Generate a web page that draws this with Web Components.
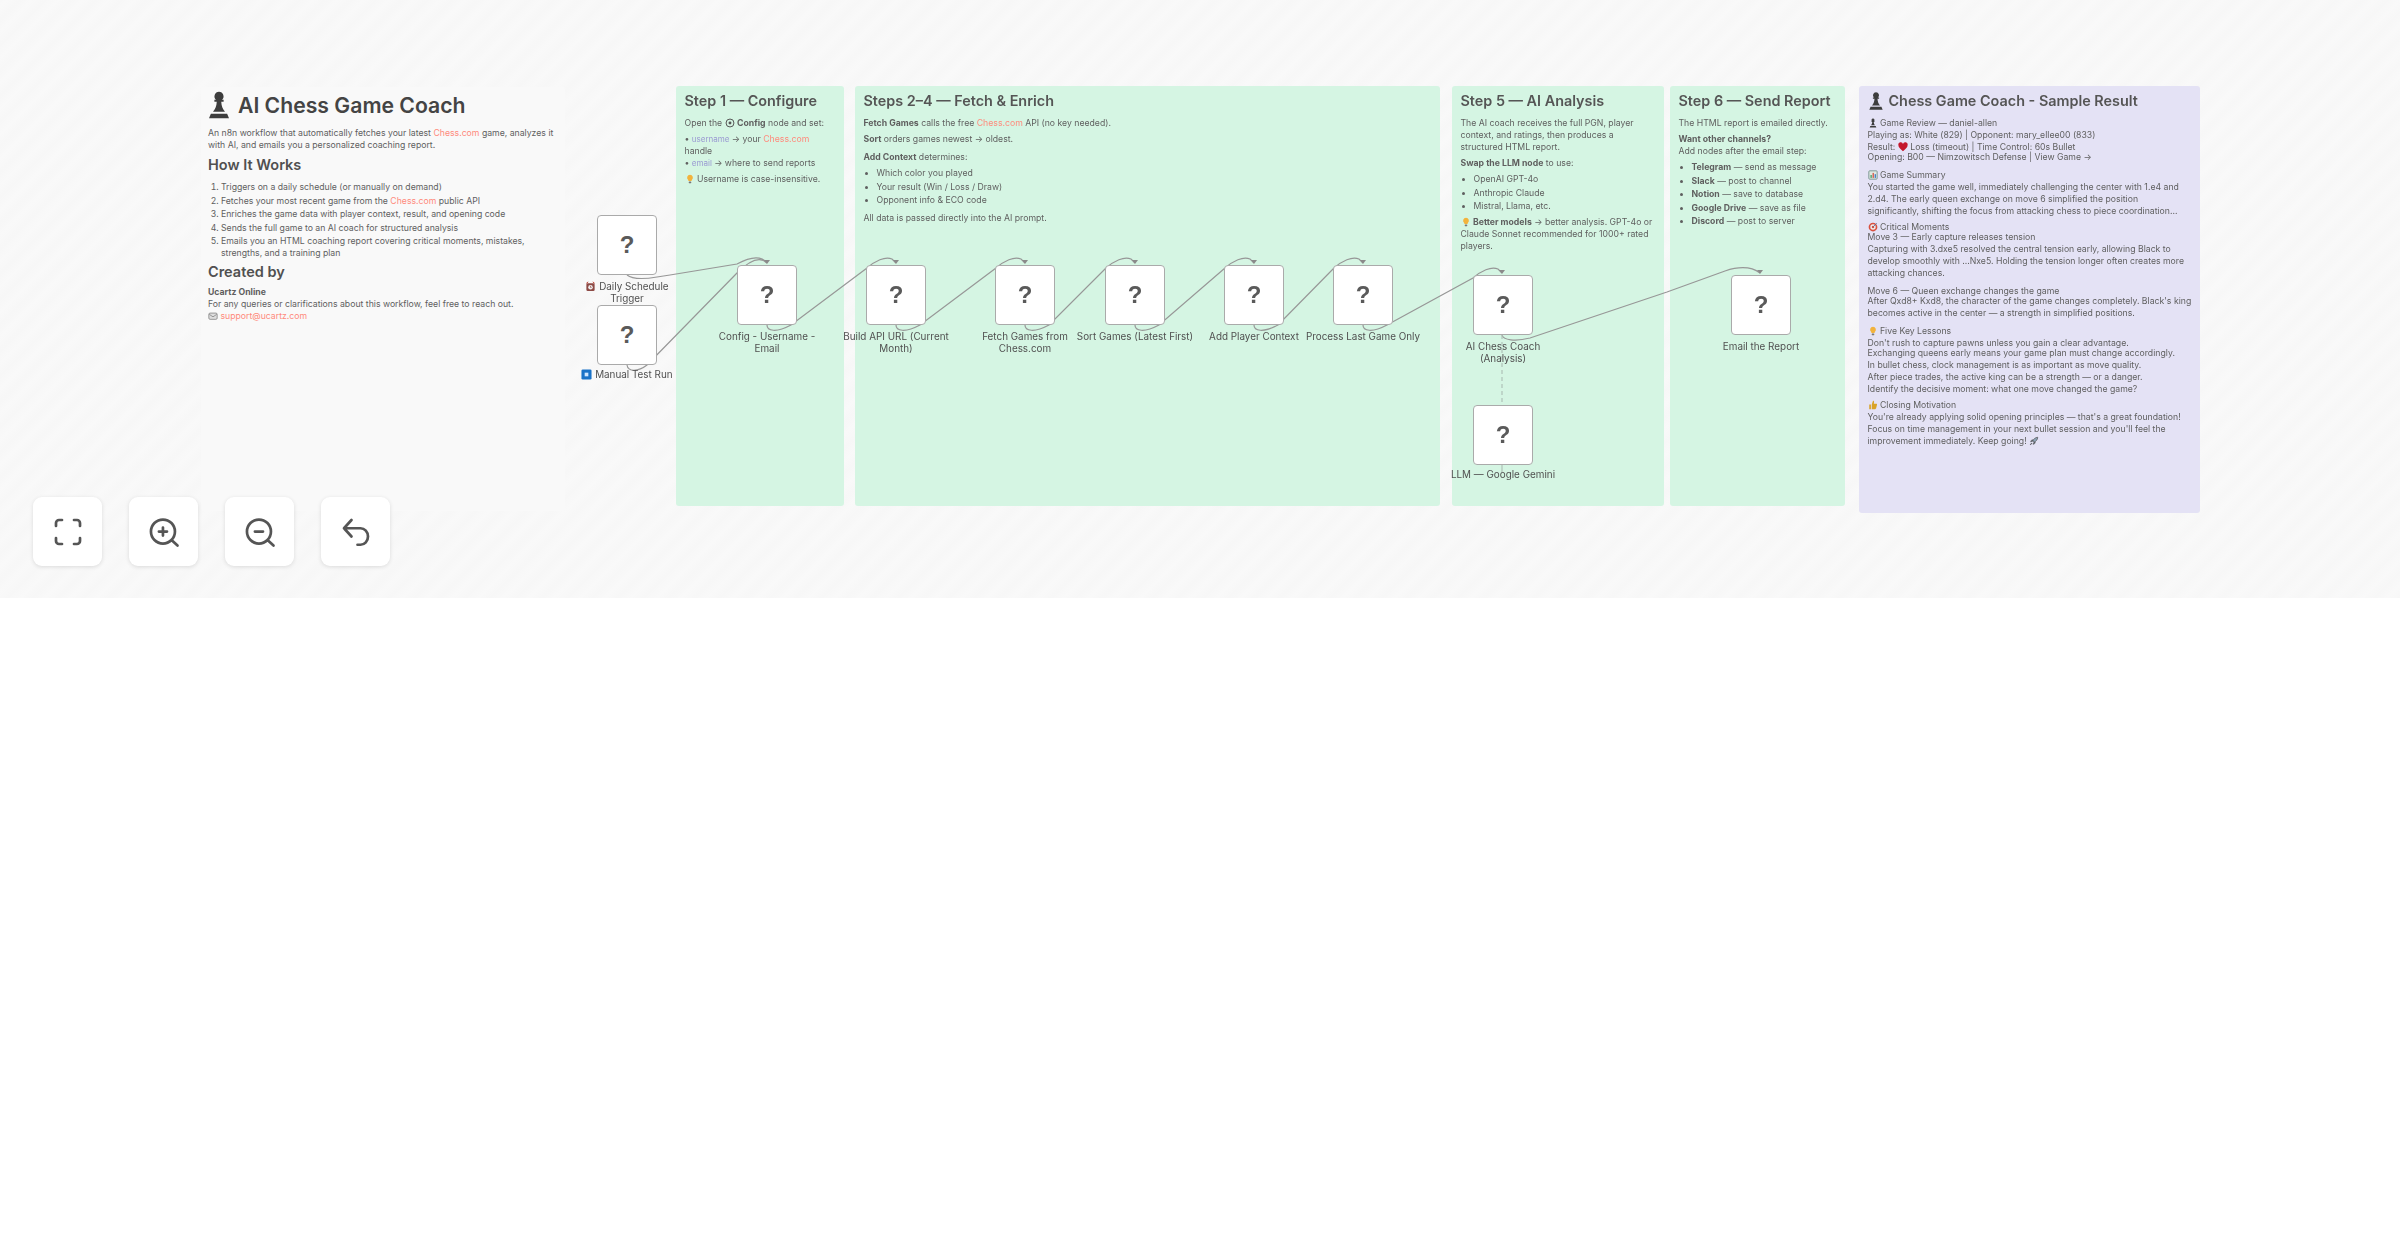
<!DOCTYPE html>
<html>
<head>
<meta charset="utf-8">
<style>
    html, body { margin: 0; background: #fff; }
</style>
</head>
<body>
<wf-canvas>
    <wf-note x="201" y="87" w="364" h="424" tone="plain">
        <h1><wf-icon name="pawn" size="30" style="margin-left:-4px"></wf-icon>AI Chess Game Coach</h1>
        <p style="margin-top:7px">An n8n workflow that automatically fetches your latest <wf-link>Chess.com</wf-link> game, analyzes it with AI, and emails you a personalized coaching report.</p>
        <h2 style="margin-top:5px">How It Works</h2>
        <ol style="margin-top:7px">
            <li>Triggers on a daily schedule (or manually on demand)</li>
            <li>Fetches your most recent game from the <wf-link>Chess.com</wf-link> public API</li>
            <li>Enriches the game data with player context, result, and opening code</li>
            <li>Sends the full game to an AI coach for structured analysis</li>
            <li>Emails you an HTML coaching report covering critical moments, mistakes, strengths, and a training plan</li>
        </ol>
        <h2 style="margin-top:4px">Created by</h2>
        <p style="margin-top:5px"><b>Ucartz Online</b><br>For any queries or clarifications about this workflow, feel free to reach out.<br><wf-icon name="mail"></wf-icon> <wf-link>support@ucartz.com</wf-link></p>
    </wf-note>

    <wf-note x="676" y="86" w="168" h="420">
        <h3>Step 1 — Configure</h3>
        <p>Open the <wf-icon name="gear"></wf-icon> <b>Config</b> node and set:</p>
        <p>• <wf-code>username</wf-code> → your <wf-link>Chess.com</wf-link> handle<br>• <wf-code>email</wf-code> → where to send reports</p>
        <p><wf-icon name="bulb"></wf-icon> Username is case-insensitive.</p>
    </wf-note>

    <wf-note x="855" y="86" w="585" h="420">
        <h3>Steps 2–4 — Fetch &amp; Enrich</h3>
        <p><b>Fetch Games</b> calls the free <wf-link>Chess.com</wf-link> API (no key needed).</p>
        <p><b>Sort</b> orders games newest → oldest.</p>
        <p style="margin-top:6px"><b>Add Context</b> determines:</p>
        <ul>
            <li>Which color you played</li>
            <li>Your result (Win / Loss / Draw)</li>
            <li>Opponent info &amp; ECO code</li>
        </ul>
        <p style="margin-top:6px">All data is passed directly into the AI prompt.</p>
    </wf-note>

    <wf-note x="1452" y="86" w="212" h="420">
        <h3>Step 5 — AI Analysis</h3>
        <p>The AI coach receives the full PGN, player context, and ratings, then produces a structured HTML report.</p>
        <p><b>Swap the LLM node</b> to use:</p>
        <ul>
            <li>OpenAI GPT-4o</li>
            <li>Anthropic Claude</li>
            <li>Mistral, Llama, etc.</li>
        </ul>
        <p><wf-icon name="bulb"></wf-icon> <b>Better models</b> → better analysis. GPT-4o or Claude Sonnet recommended for 1000+ rated players.</p>
    </wf-note>

    <wf-note x="1670" y="86" w="175" h="420">
        <h3>Step 6 — Send Report</h3>
        <p>The HTML report is emailed directly.</p>
        <p><b>Want other channels?</b><br>Add nodes after the email step:</p>
        <ul>
            <li><b>Telegram</b> — send as message</li>
            <li><b>Slack</b> — post to channel</li>
            <li><b>Notion</b> — save to database</li>
            <li><b>Google Drive</b> — save as file</li>
            <li><b>Discord</b> — post to server</li>
        </ul>
    </wf-note>

    <wf-note x="1859" y="86" w="341" h="427" tone="purple">
        <h3><wf-icon name="pawn" size="20" style="margin:-2px 1px -2px -2px"></wf-icon>Chess Game Coach - Sample Result</h3>
        <p>
            <wf-line><wf-icon name="pawn"></wf-icon> Game Review — daniel-allen</wf-line>
            <wf-line>Playing as: White (829) | Opponent: mary_ellee00 (833)</wf-line>
            <wf-line>Result: <wf-icon name="heart"></wf-icon> Loss (timeout) | Time Control: 60s Bullet</wf-line>
            <wf-line tight>Opening: B00 — Nimzowitsch Defense | View Game →</wf-line>
        </p>
        <p style="margin-top:6px">
            <wf-line><wf-icon name="chart"></wf-icon> Game Summary</wf-line>
            <wf-line>You started the game well, immediately challenging the center with 1.e4 and</wf-line>
            <wf-line>2.d4. The early queen exchange on move 6 simplified the position</wf-line>
            <wf-line>significantly, shifting the focus from attacking chess to piece coordination...</wf-line>
        </p>
        <p>
            <wf-line><wf-icon name="target"></wf-icon> Critical Moments</wf-line>
            <wf-line tight>Move 3 — Early capture releases tension</wf-line>
            <wf-line>Capturing with 3.dxe5 resolved the central tension early, allowing Black to</wf-line>
            <wf-line>develop smoothly with ...Nxe5. Holding the tension longer often creates more</wf-line>
            <wf-line>attacking chances.</wf-line>
        </p>
        <p style="margin-top:6px">
            <wf-line>Move 6 — Queen exchange changes the game</wf-line>
            <wf-line tight>After Qxd8+ Kxd8, the character of the game changes completely. Black's king</wf-line>
            <wf-line>becomes active in the center — a strength in simplified positions.</wf-line>
        </p>
        <p style="margin-top:6px">
            <wf-line><wf-icon name="bulb"></wf-icon> Five Key Lessons</wf-line>
            <wf-line>Don't rush to capture pawns unless you gain a clear advantage.</wf-line>
            <wf-line tight>Exchanging queens early means your game plan must change accordingly.</wf-line>
            <wf-line>In bullet chess, clock management is as important as move quality.</wf-line>
            <wf-line>After piece trades, the active king can be a strength — or a danger.</wf-line>
            <wf-line>Identify the decisive moment: what one move changed the game?</wf-line>
        </p>
        <p>
            <wf-line><wf-icon name="thumb"></wf-icon> Closing Motivation</wf-line>
            <wf-line>You're already applying solid opening principles — that's a great foundation!</wf-line>
            <wf-line>Focus on time management in your next bullet session and you'll feel the</wf-line>
            <wf-line>improvement immediately. Keep going! <wf-icon name="rocket"></wf-icon></wf-line>
        </p>
    </wf-note>

    <wf-edges></wf-edges>

    <wf-node x="597" y="215"><wf-icon name="alarm" size="11"></wf-icon> Daily Schedule Trigger</wf-node>
    <wf-node x="597" y="305" tight><wf-icon name="play" size="11"></wf-icon> Manual Test Run</wf-node>
    <wf-node x="737" y="265">Config - Username - Email</wf-node>
    <wf-node x="866" y="265">Build API URL (Current Month)</wf-node>
    <wf-node x="995" y="265">Fetch Games from Chess.com</wf-node>
    <wf-node x="1105" y="265">Sort Games (Latest First)</wf-node>
    <wf-node x="1224" y="265">Add Player Context</wf-node>
    <wf-node x="1333" y="265">Process Last Game Only</wf-node>
    <wf-node x="1473" y="275">AI Chess Coach (Analysis)</wf-node>
    <wf-node x="1473" y="405" tight>LLM — Google Gemini</wf-node>
    <wf-node x="1731" y="275">Email the Report</wf-node>

    <wf-toolbar slot="overlay">
        <wf-tool-button icon="fit"></wf-tool-button>
        <wf-tool-button icon="in"></wf-tool-button>
        <wf-tool-button icon="out"></wf-tool-button>
        <wf-tool-button icon="undo"></wf-tool-button>
    </wf-toolbar>
</wf-canvas>

<script>
    const ICONS = {
        pawn: '<path fill="#3d3d3d" d="M12 1.5a3.6 3.6 0 0 1 2.4 6.3h1.3v1.6h-1.9c.2 3.4 1 5.6 3 8h-9.600c2-2.400 2.800-4.600 3-8H8.300V7.800h1.300A3.600 3.600 0 0 1 12 1.500zM5.500 19h13l1.500 3.500H4z"/>',
        alarm: '<rect x="3" y="5" width="18" height="17" rx="3" fill="#8d4a45"/><circle cx="12" cy="13.500" r="5" fill="#eee"/><path d="M12 10.500v3.500h2.500" stroke="#8d4a45" stroke-width="1.500" fill="none"/><path d="M3 5l4-3M21 5l-4-3" stroke="#c0392b" stroke-width="2"/>',
        play: '<rect x="1" y="1" width="22" height="22" rx="3" fill="#1a73c8"/><rect x="8" y="8" width="8" height="8" fill="#cfe6ff"/>',
        bulb: '<path fill="#f2b33d" d="M12 2a7 7 0 0 1 4 12.700V17H8v-2.300A7 7 0 0 1 12 2z"/><rect x="9" y="18" width="6" height="4" rx="1" fill="#777"/>',
        gear: '<circle cx="12" cy="12" r="9.500" fill="none" stroke="#555" stroke-width="2.400"/><circle cx="12" cy="12" r="3.500" fill="#555"/>',
        mail: '<rect x="2" y="5" width="20" height="15" rx="3" fill="#ddd" stroke="#888" stroke-width="2"/><path d="M3 8l9 6 9-6" fill="none" stroke="#888" stroke-width="2"/>',
        heart: '<path fill="#c4172c" d="M12 22C5 16 1 12 1 7.500A5.500 5.500 0 0 1 12 5a5.500 5.500 0 0 1 11 2.500C23 12 19 16 12 22z"/>',
        chart: '<rect x="2" y="2" width="20" height="20" rx="2" fill="#dfe8e2" stroke="#6b8a86" stroke-width="2"/><rect x="6" y="12" width="3" height="7" fill="#3d9a5f"/><rect x="11" y="7" width="3" height="12" fill="#d0503f"/><rect x="16" y="10" width="3" height="9" fill="#3b76c4"/>',
        target: '<circle cx="12" cy="12" r="10.500" fill="#d9503f"/><circle cx="12" cy="12" r="6.500" fill="#eee"/><circle cx="12" cy="12" r="3" fill="#d9503f"/><path d="M12 12L21 3" stroke="#4a6fa5" stroke-width="2"/>',
        thumb: '<path fill="#d9a227" d="M3 11h4v11H3zM9 11l3-9c2 0 3 1.500 2.500 4L14 9h6c1.500 0 2 1.500 1.500 3l-2 8c-.3 1.300-1 2-2.500 2H9z"/>',
        rocket: '<path fill="#8fa6b8" stroke="#444" stroke-width="1.500" d="M21 3c-6 .5-10 4-12 9l3 3c5-2 8.500-6 9-12zM8 13l-4 1 2-4 3-1zM11 16l-1 4 4-2 1-3zM6 17l-3 4 4-3z"/>'
    };

    customElements.define('wf-icon',
        class extends HTMLElement {
            connectedCallback() {
                const size = this.getAttribute('size') || 10;
                this.attachShadow({ mode: 'open' }).innerHTML = `
                    <style>
                        :host { display: inline-block; vertical-align: -1.5px; line-height: 0; flex: none; }
                    </style>
                    <svg width="${size}" height="${size}" viewBox="0 0 24 24">${ICONS[this.getAttribute('name')]}</svg>
                `;
            }
        });

    customElements.define('wf-link',
        class extends HTMLElement {
            constructor() {
                super();
                this.attachShadow({ mode: 'open' }).innerHTML = `
                    <style>:host { color: #ff8a7c; }</style><slot></slot>
                `;
            }
        });

    customElements.define('wf-code',
        class extends HTMLElement {
            constructor() {
                super();
                this.attachShadow({ mode: 'open' }).innerHTML = `
                    <style>:host { color: #9a9ad2; font-size: 8px; }</style><slot></slot>
                `;
            }
        });

    customElements.define('wf-line',
        class extends HTMLElement {
            constructor() {
                super();
                this.attachShadow({ mode: 'open' }).innerHTML = `
                    <style>
                        :host { display: block; white-space: nowrap; }
                        :host([tight]) { margin-top: -2px; }
                    </style>
                    <slot></slot>
                `;
            }
        });

    customElements.define('wf-note',
        class extends HTMLElement {
            constructor() {
                super();
                this.attachShadow({ mode: 'open' }).innerHTML = `
                    <style>
                        :host {
                            position: absolute;
                            box-sizing: border-box;
                            padding: 7px 8.500px;
                            border-radius: 3px;
                            background: #d5f5e3;
                            color: #5f5f5f;
                            font: 8.700px/12px Inter, "Noto Sans", sans-serif;
                            overflow: hidden;
                        }
                        :host([tone="plain"]) { background: #f9f9f9; padding: 3px 7px; }
                        :host([tone="purple"]) { background: #e4e2f5; }
                        ::slotted(h1) {
                            display: flex;
                            align-items: center;
                            gap: 4px;
                            height: 30px;
                            margin: 0;
                            font-size: 21.200px;
                            font-weight: 600;
                            color: #444;
                        }
                        ::slotted(h2) {
                            margin: 0;
                            font-size: 14.500px;
                            line-height: 18px;
                            font-weight: 600;
                            color: #505050;
                        }
                        ::slotted(h3) {
                            display: flex;
                            align-items: center;
                            gap: 2px;
                            height: 16px;
                            margin: 0 0 8px;
                            font-size: 14.400px;
                            font-weight: 600;
                            color: #555;
                        }
                        ::slotted(p) { margin: 0 0 4px; }
                        ::slotted(ul), ::slotted(ol) {
                            display: flex;
                            flex-direction: column;
                            gap: 1.500px;
                            margin: 0 0 4px;
                            padding-left: 13px;
                        }
                    </style>
                    <slot></slot>
                `;
            }

            connectedCallback() {
                this.style.left = this.getAttribute('x') + 'px';
                this.style.top = this.getAttribute('y') + 'px';
                this.style.width = this.getAttribute('w') + 'px';
                this.style.height = this.getAttribute('h') + 'px';
            }
        });

    customElements.define('wf-node',
        class extends HTMLElement {
            constructor() {
                super();
                this.attachShadow({ mode: 'open' }).innerHTML = `
                    <style>
                        :host {
                            position: absolute;
                            width: 60px;
                            color: #505050;
                            font: 9.900px/12px Inter, "Noto Sans", sans-serif;
                        }
                        .box {
                            box-sizing: border-box;
                            display: flex;
                            align-items: center;
                            justify-content: center;
                            height: 60px;
                            background: #fff;
                            border: 1.500px solid #aaa;
                            border-radius: 4px;
                            color: #5a5a5a;
                            font: bold 24px "Liberation Sans", sans-serif;
                        }
                        .label {
                            width: 118px;
                            margin: 5px 0 0 -29px;
                            text-align: center;
                        }
                        :host([tight]) .label { margin-top: 3px; }
                    </style>
                    <div class="box">?</div>
                    <div class="label"><slot></slot></div>
                `;
            }

            connectedCallback() {
                this.style.left = this.getAttribute('x') + 'px';
                this.style.top = this.getAttribute('y') + 'px';
            }
        });

    customElements.define('wf-edges',
        class extends HTMLElement {
            // from a node's bottom centre to the top centre of the next one
            build_edge(x1, y1, x2, y2) {
                return `M${x1} ${y1}C${x1} ${y1 + 6} ${x1 + 9} ${y1 + 8} ${x1 + 24} ${y1}L${x2 - 29} ${y2 + 5}C${x2 - 21} ${y2 - 2} ${x2 - 11} ${y2 - 7} ${x2 - 4} ${y2 - 4}L${x2} ${y2}`;
            }

            constructor() {
                super();
                const row = [[767, 896], [896, 1025], [1025, 1135], [1135, 1254], [1254, 1363]];
                let paths = row.map(([a, b]) => this.build_edge(a, 325, b, 263));
                paths.push(this.build_edge(1363, 325, 1502, 273));
                paths.push('M627 275C632 279 645 279 657 277L670 275L737 264C748 258 760 254 767 263');
                paths.push('M627 365C628 372 638 372 647 365L737 273C745 265 758 254 767 263');
                paths.push('M1502 335C1503 340 1515 342 1530 338L1667 292L1725 271C1740 266 1752 267 1760 273');

                const ends = [[896, 263], [1025, 263], [1135, 263], [1254, 263], [1363, 263], [1502, 273], [767, 263], [1760, 273]];
                const arrows = ends.map(([x, y]) => `<path d="M${x - 3} ${y - 3}h6l-3 4z" fill="#8a8a8a"/>`).join('');

                this.attachShadow({ mode: 'open' }).innerHTML = `
                    <style>
                        :host { position: absolute; left: 0; top: 0; }
                        svg { display: block; }
                    </style>
                    <svg width="2400" height="598" fill="none" stroke="#979797" stroke-width="1.200">
                        ${paths.map(d => `<path d="${d}"/>`).join('')}
                        <path d="M1502 335V405" stroke="#b0c2b8" stroke-dasharray="4 3"/>
                        <path d="M1502 463V472" stroke="#b0c2b8"/>
                        <g stroke="none">${arrows}</g>
                    </svg>
                `;
            }
        });

    customElements.define('wf-tool-button',
        class extends HTMLElement {
            TOOL_ICONS = {
                fit: 'M4 8V6a2 2 0 0 1 2-2h2M4 16v2a2 2 0 0 0 2 2h2M16 4h2a2 2 0 0 1 2 2v2M16 20h2a2 2 0 0 0 2-2v-2',
                in: 'M3.300 11.700a8 8 0 1 0 16 0a8 8 0 1 0-16 0M21 21l-4-3.700M8.600 11.700h5.400M11.300 9v5.400',
                out: 'M3.300 11.700a8 8 0 1 0 16 0a8 8 0 1 0-16 0M21 21l-4-3.700M8.600 11.700h5.400',
                undo: 'M9 15L4 9.500l5-5.500M4 9.500h11a5 5.500 0 1 1 0 11h-2'
            };

            connectedCallback() {
                this.attachShadow({ mode: 'open' }).innerHTML = `
                    <style>
                        :host {
                            display: flex;
                            align-items: center;
                            justify-content: center;
                            width: 69px;
                            height: 69px;
                            background: #fff;
                            border-radius: 9px;
                            box-shadow: 0 1px 4px rgba(0, 0, 0, .12);
                        }
                    </style>
                    <svg width="36" height="36" viewBox="0 0 24 24" fill="none" stroke="#555" stroke-width="1.800" stroke-linecap="round" stroke-linejoin="round">
                        <path d="${this.TOOL_ICONS[this.getAttribute('icon')]}"/>
                    </svg>
                `;
            }
        });

    customElements.define('wf-toolbar',
        class extends HTMLElement {
            constructor() {
                super();
                this.attachShadow({ mode: 'open' }).innerHTML = `
                    <style>
                        :host {
                            position: absolute;
                            left: 33px;
                            top: 497px;
                            display: flex;
                            gap: 27px;
                            filter: blur(.4px);
                        }
                    </style>
                    <slot></slot>
                `;
            }
        });

    customElements.define('wf-canvas',
        class extends HTMLElement {
            constructor() {
                super();
                this.attachShadow({ mode: 'open' }).innerHTML = `
                    <style>
                        :host {
                            display: block;
                            position: relative;
                            height: 598px;
                            overflow: hidden;
                            background: repeating-linear-gradient(-45deg, #f7f7f7 0, #f9f9f9 9px, #f7f7f7 18px);
                        }
                        .view {
                            position: absolute;
                            inset: 0;
                            filter: blur(.7px);
                        }
                    </style>
                    <div class="view"><slot></slot></div>
                    <slot name="overlay"></slot>
                `;
            }
        });
</script>
</body>
</html>
